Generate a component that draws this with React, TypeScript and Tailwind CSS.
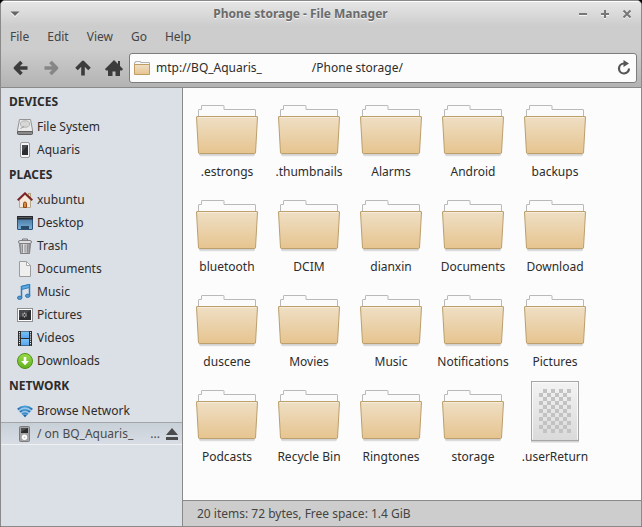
import React, { useState } from 'react';

interface Place {
  name: string;
  icon: React.ReactNode;
}

interface PlaceGroup {
  title: string;
  items: Place[];
}

interface FileItem {
  name: string;
  kind: 'folder' | 'file';
}

const MENUS = ['File', 'Edit', 'View', 'Go', 'Help'];

const FILES: FileItem[] = [
  { name: '.estrongs', kind: 'folder' },
  { name: '.thumbnails', kind: 'folder' },
  { name: 'Alarms', kind: 'folder' },
  { name: 'Android', kind: 'folder' },
  { name: 'backups', kind: 'folder' },
  { name: 'bluetooth', kind: 'folder' },
  { name: 'DCIM', kind: 'folder' },
  { name: 'dianxin', kind: 'folder' },
  { name: 'Documents', kind: 'folder' },
  { name: 'Download', kind: 'folder' },
  { name: 'duscene', kind: 'folder' },
  { name: 'Movies', kind: 'folder' },
  { name: 'Music', kind: 'folder' },
  { name: 'Notifications', kind: 'folder' },
  { name: 'Pictures', kind: 'folder' },
  { name: 'Podcasts', kind: 'folder' },
  { name: 'Recycle Bin', kind: 'folder' },
  { name: 'Ringtones', kind: 'folder' },
  { name: 'storage', kind: 'folder' },
  { name: '.userReturn', kind: 'file' },
];

// Shared gradients, referenced by id from the icons below
const Gradients: React.FC = () => (
  <svg width="0" height="0" className="absolute" aria-hidden="true">
    <defs>
      <linearGradient id="folder" x1="0" y1="0" x2="0" y2="1">
        <stop offset="0" stopColor="#efdfc5" />
        <stop offset="1" stopColor="#e6c48f" />
      </linearGradient>
      <linearGradient id="sheet" x1="0" y1="0" x2="0" y2="1">
        <stop offset="0" stopColor="#f3f3f3" />
        <stop offset="1" stopColor="#dadada" />
      </linearGradient>
      <linearGradient id="desk" x1="0" y1="0" x2="0" y2="1">
        <stop offset="0" stopColor="#3d6f9c" />
        <stop offset="1" stopColor="#7fb2d8" />
      </linearGradient>
      <linearGradient id="film" x1="0" y1="0" x2="0" y2="1">
        <stop offset="0" stopColor="#79c0f7" />
        <stop offset="1" stopColor="#55a5ee" />
      </linearGradient>
      <linearGradient id="green" x1="0" y1="0" x2="0" y2="1">
        <stop offset="0" stopColor="#9bdb4c" />
        <stop offset="1" stopColor="#62b01e" />
      </linearGradient>
      <linearGradient id="metal" x1="0" y1="0" x2="1" y2="0">
        <stop offset="0" stopColor="#8c8c8c" />
        <stop offset="0.4" stopColor="#e8e8e8" />
        <stop offset="1" stopColor="#85858a" />
      </linearGradient>
      <linearGradient id="wifi" x1="0" y1="0" x2="0" y2="1">
        <stop offset="0" stopColor="#4aa0d8" />
        <stop offset="1" stopColor="#1f64a8" />
      </linearGradient>
    </defs>
  </svg>
);

const Icon: React.FC<{ children: React.ReactNode }> = ({ children }) => (
  <svg width="16" height="16" viewBox="0 0 16 16" className="shrink-0" aria-hidden="true">
    {children}
  </svg>
);

const DriveIcon = () => (
  <Icon>
    <path d="M2.500 .5h11l2 10.500v3.500h-15V11z" fill="#e9e9e9" stroke="#939393" />
    <path d="M.5 12.500h15v2a1 1 0 0 1-1 1h-13a1 1 0 0 1-1-1z" fill="#8a8a8a" stroke="#5f5f5f" />
    <ellipse cx="8" cy="5" rx="4.500" ry="3.200" fill="#dadada" stroke="#b2b2b2" />
    <ellipse cx="8" cy="5" rx="1.300" ry="1" fill="#fff" stroke="#aaa" strokeWidth=".5" />
    <path d="M3.500 9.500L7 7.500" stroke="#999" />
  </Icon>
);

const PhoneIcon = () => (
  <Icon>
    <rect x="3.500" y=".5" width="9" height="15" rx="1.500" fill="#f4f4f4" stroke="#999" />
    <rect x="5" y="3" width="6" height="10" fill="#2b2d30" />
    <path d="M5 3h6L5 10z" fill="#4a4d52" />
  </Icon>
);

const HouseIcon = () => (
  <Icon>
    <rect x="11.500" y="1.500" width="2" height="5" fill="#e8dcc0" stroke="#a89468" strokeWidth=".8" />
    <path d="M2.500 8L8 2.500 13.500 8v7.500h-11z" fill="#f6e9da" stroke="#b8a890" />
    <path d="M.7 8.300L8 1.300l7.300 7" fill="none" stroke="#7d2326" strokeWidth="2" />
    <path d="M6.500 15.500v-4a1.500 1.500 0 0 1 3 0v4z" fill="#d8873c" stroke="#8f4a17" />
  </Icon>
);

const DesktopIcon = () => (
  <Icon>
    <rect x=".5" y="1.500" width="15" height="13" rx=".5" fill="url(#desk)" stroke="#2c5377" />
    <rect x="0" y="1" width="16" height="3.500" rx=".5" fill="#26292c" />
    <path d="M1 2.500h14" stroke="#54595e" />
    <rect x="4" y="11" width="8" height="3" fill="#284b6c" />
  </Icon>
);

const TrashIcon = () => (
  <Icon>
    <path d="M2.500 5.500h11l-1 10h-9z" fill="url(#metal)" stroke="#7d7d82" />
    <path d="M5.500 6.500v8M8 6.500v8M10.500 6.500v8" stroke="#8b8b90" />
    <rect x="1.500" y="2.500" width="13" height="3" rx="1.500" fill="#dedee0" stroke="#808084" />
    <path d="M5.500 2.500v-1.500h5v1.500" fill="none" stroke="#77777b" />
  </Icon>
);

const DocumentIcon = () => (
  <Icon>
    <path d="M2.500 .5h7l4 4v11h-11z" fill="#efefef" stroke="#9c9c9c" />
    <path d="M9.500 .5v4h4z" fill="#fff" stroke="#a8a8a8" />
  </Icon>
);

const MusicIcon = () => (
  <Icon>
    <path d="M4.500 13.500V2.500l8-2v11" fill="none" stroke="#2f7fc0" strokeWidth="1.500" />
    <path d="M4.500 2.500l8-2v3l-8 2z" fill="#62abe0" stroke="#2f7fc0" />
    <ellipse cx="2.700" cy="13.800" rx="2.300" ry="1.700" fill="#4a9ad8" stroke="#2669a4" strokeWidth=".8" />
    <ellipse cx="10.700" cy="11.800" rx="2.300" ry="1.700" fill="#4a9ad8" stroke="#2669a4" strokeWidth=".8" />
  </Icon>
);

const PictureIcon = () => (
  <Icon>
    <rect x=".5" y="1.500" width="15" height="13" fill="#fff" stroke="#8f8f8f" />
    <rect x="2" y="3" width="12" height="10" fill="#2d2f31" />
    <path d="M2 3h12L2 11z" fill="#46484b" />
    <path d="M7.500 5.500v5M5 8h5M5.700 6.200l3.600 3.600M9.300 6.200L5.700 9.800" stroke="#bdbdbd" strokeWidth=".9" />
    <circle cx="7.500" cy="8" r=".9" fill="#333" />
  </Icon>
);

const VideoIcon = () => (
  <Icon>
    <rect x="1" y="1" width="14" height="15" fill="#2b2d2f" />
    <rect x="4" y="1.500" width="8" height="6.500" fill="url(#film)" />
    <rect x="4" y="9" width="8" height="6.500" fill="url(#film)" />
    <path d="M2.500 2v13.500M13.500 2v13.500" stroke="#e6e6e6" strokeDasharray="1.200 1" />
  </Icon>
);

const DownloadIcon = () => (
  <Icon>
    <circle cx="8" cy="8" r="7.500" fill="url(#green)" stroke="#4f9316" />
    <path d="M6.700 4h2.600v4h2.700L8 12.300 4 8h2.700z" fill="#fff" />
  </Icon>
);

const WifiIcon = () => (
  <Icon>
    <path d="M0 6a11.500 11.500 0 0 1 16 0L8 14.500z" fill="#9cc6e6" />
    <g fill="none" stroke="url(#wifi)" strokeWidth="1.800">
      <path d="M.8 6.300a10.500 10.500 0 0 1 14.400 0" />
      <path d="M3 8.800a7.300 7.300 0 0 1 10 0" />
      <path d="M5.200 11.200a4.200 4.200 0 0 1 5.600 0" />
    </g>
    <path d="M6.200 12.200a2.800 2.800 0 0 1 3.600 0L8 14.300z" fill="#1f64a8" />
  </Icon>
);

const PlayerIcon = () => (
  <Icon>
    <rect x="2.500" y=".5" width="10" height="15" rx="1" fill="#a3a3a3" stroke="#7b7b7b" />
    <rect x="4" y="2" width="7" height="5" fill="#2a2c2e" />
    <path d="M4 2h7L4 6z" fill="#4c4e50" />
    <circle cx="7.500" cy="11.300" r="2.700" fill="#fff" />
    <circle cx="7.500" cy="11.300" r=".9" fill="#c6c6c6" />
  </Icon>
);

const FolderIcon = () => (
  <svg width="64" height="64" viewBox="0 0 64 64" aria-hidden="true">
    <path d="M4 59.500h56" stroke="#000" strokeOpacity=".14" strokeWidth="2" />
    <path d="M5 60.500h54" stroke="#000" strokeOpacity=".06" strokeWidth="2" />
    <path
      d="M3.500 24V15a.5.500 0 0 1 .5-.5h2.500V11a.5.500 0 0 1 .5-.5h21.500a.5.500 0 0 1 .5.500v3.500h31a.5.500 0 0 1 .5.500v9"
      fill="#fbfbfb"
      stroke="#b9b9b9"
    />
    <path
      d="M2 21.500h60a.5.500 0 0 1 .5.500L60.500 58a1 1 0 0 1-1 .5h-55a1 1 0 0 1-1-.5L1.500 22a.5.500 0 0 1 .5-.5z"
      fill="url(#folder)"
      stroke="#bb9f6c"
    />
    <path d="M3 22.500h58" stroke="#f7ecd9" />
  </svg>
);

const UnknownFileIcon = () => (
  <svg width="64" height="64" viewBox="0 0 64 64" aria-hidden="true">
    <path d="M8 61.500h48" stroke="#000" strokeOpacity=".16" strokeWidth="2" />
    <rect x="8.500" y="1.500" width="47" height="59" fill="url(#sheet)" stroke="#a6a6a6" />
    <path d="M9.500 59.500v-57h45v57" fill="none" stroke="#fafafa" />
    {Array.from({ length: 44 }, (_, i) => {
      const row = Math.floor(i / 4);
      const x = 16 + (i % 4) * 8 + (row % 2 === 0 ? 4 : 0);
      return <rect key={i} x={x} y={9 + row * 4} width="4" height="4" fill="#c2c2c2" />;
    })}
  </svg>
);

const GROUPS: PlaceGroup[] = [
  {
    title: 'DEVICES',
    items: [
      { name: 'File System', icon: <DriveIcon /> },
      { name: 'Aquaris', icon: <PhoneIcon /> },
    ],
  },
  {
    title: 'PLACES',
    items: [
      { name: 'xubuntu', icon: <HouseIcon /> },
      { name: 'Desktop', icon: <DesktopIcon /> },
      { name: 'Trash', icon: <TrashIcon /> },
      { name: 'Documents', icon: <DocumentIcon /> },
      { name: 'Music', icon: <MusicIcon /> },
      { name: 'Pictures', icon: <PictureIcon /> },
      { name: 'Videos', icon: <VideoIcon /> },
      { name: 'Downloads', icon: <DownloadIcon /> },
    ],
  },
  {
    title: 'NETWORK',
    items: [{ name: 'Browse Network', icon: <WifiIcon /> }],
  },
];

const TitleBar: React.FC = () => (
  <div className="flex h-6 items-center border-t border-white bg-linear-to-b from-[#e6e6e6] to-[#cecece] pr-[3px]">
    <button type="button" aria-label="Window menu" className="flex w-7 justify-center">
      <svg width="10" height="6" viewBox="0 0 10 6">
        <path d="M1 2h8L5 6z" fill="#fff" />
        <path d="M.5 .5h9L5 5z" fill="#666" />
      </svg>
    </button>
    <h1 className="flex-1 text-center font-bold text-[#6b6b6b] [text-shadow:0_1px_0_#f2f2f2]">
      Phone storage - File Manager
    </h1>
    <button type="button" aria-label="Minimize" className="flex w-[22px] justify-center">
      <svg width="10" height="10" viewBox="0 0 10 10">
        <path d="M1 6.500h8" stroke="#f4f4f4" />
        <path d="M1 5h8" stroke="#777" strokeWidth="2" />
      </svg>
    </button>
    <button type="button" aria-label="Maximize" className="flex w-[22px] justify-center">
      <svg width="10" height="10" viewBox="0 0 10 10">
        <path d="M1 6.500h8M4 9.500h2" stroke="#f4f4f4" />
        <path d="M1 5h8M5 1v8" stroke="#777" strokeWidth="2" />
      </svg>
    </button>
    <button type="button" aria-label="Close" className="flex w-[22px] justify-center">
      <svg width="10" height="10" viewBox="0 0 10 10">
        <path d="M1.500 2.500l7 7M8.500 2.500l-7 7" stroke="#f4f4f4" strokeWidth="2" />
        <path d="M1.500 1.500l7 7M8.500 1.500l-7 7" stroke="#777" strokeWidth="2" />
      </svg>
    </button>
  </div>
);

const Toolbar: React.FC = () => {
  const [path, setPath] = useState<string>(`mtp://BQ_Aquaris_${'\u00a0'.repeat(16)}/Phone storage/`);

  return (
    <div className="flex h-[39px] items-center border-b border-[#8a8a8a] bg-linear-to-b from-[#cdcdcd] to-[#b3b3b3] pr-1 pl-1">
      <button type="button" aria-label="Back" className="flex w-[31px] justify-center text-[#3c3c3c]">
        <Icon>
          <path d="M8.500 2L2.500 8l6 6M3 8h11.500" fill="none" stroke="currentColor" strokeWidth="3.600" strokeLinejoin="round" />
        </Icon>
      </button>
      <button type="button" aria-label="Forward" className="flex w-[31px] justify-center text-[#868686]">
        <Icon>
          <path d="M6.500 2l6 6-6 6M12 8H.5" fill="none" stroke="currentColor" strokeWidth="3.600" strokeLinejoin="round" />
        </Icon>
      </button>
      <button type="button" aria-label="Parent folder" className="flex w-[31px] justify-center text-[#3c3c3c]">
        <Icon>
          <path d="M1.500 9L8 2.500 14.500 9M8 3v12.500" fill="none" stroke="currentColor" strokeWidth="3.600" strokeLinejoin="round" />
        </Icon>
      </button>
      <button type="button" aria-label="Home" className="flex w-[31px] justify-center text-[#3c3c3c]">
        <svg width="18" height="16" viewBox="0 0 18 16">
          <path d="M9 0L0 9l1 1.500h2V16h4.500v-4.500h3V16H15v-5.500h2L18 9l-3-3V1h-2v3z" fill="currentColor" />
        </svg>
      </button>
      <div className="flex h-[30px] flex-1 items-center rounded-[3px] border border-[#7d7d7d] bg-[#fcfcfc] px-1">
        <svg width="16" height="16" viewBox="0 0 16 16" className="shrink-0" aria-hidden="true">
          <path d="M.5 5V2.500h1v-1h5v1h9V5" fill="#f8f8f8" stroke="#b2b2b2" />
          <path d="M.5 4.500h15v10H.5z" fill="url(#folder)" stroke="#bf9c62" />
        </svg>
        <input
          type="text"
          aria-label="Location"
          className="min-w-0 flex-1 bg-transparent px-[6px] outline-none"
          value={path}
          onChange={(e) => setPath(e.target.value)}
        />
        <button type="button" aria-label="Reload" className="flex text-[#555]">
          <Icon>
            <path d="M13 8.500A5 5 0 1 1 8 3.500h1.500" fill="none" stroke="currentColor" strokeWidth="2.200" />
            <path d="M7.500 0l5.500 3.500L7.500 7z" fill="currentColor" />
          </Icon>
        </button>
      </div>
    </div>
  );
};

const Sidebar: React.FC = () => (
  <aside className="w-[182px] shrink-0 border-r border-[#8a8a8a] bg-[#dbdfe6]">
    {GROUPS.map((group) => (
      <section key={group.title}>
        <h2 className="flex h-[27px] items-center pl-2 font-bold">{group.title}</h2>
        {group.items.map((item) => (
          <button key={item.name} type="button" className="flex h-[23px] w-full items-center gap-1 pl-4">
            {item.icon}
            {item.name}
          </button>
        ))}
      </section>
    ))}
    <div className="flex h-[23px] items-center border-t border-b border-t-[#a2a6ab] border-b-[#eff1f4] bg-linear-to-b from-[#c8d0d8] to-[#d8dde4] pr-1 pl-4 text-[#4a4a4a]">
      <button type="button" className="flex min-w-0 flex-1 items-center gap-1">
        <PlayerIcon />
        <span className="flex-1 text-left whitespace-nowrap">/ on BQ_Aquaris_</span>
        <span>...</span>
      </button>
      <button type="button" aria-label="Eject" className="ml-[6px]">
        <svg width="12" height="12" viewBox="0 0 12 12">
          <path d="M6 0l6 7H0z" fill="#4b4b4b" />
          <path d="M0 9h12v3H0z" fill="#4b4b4b" />
        </svg>
      </button>
    </div>
  </aside>
);

const App: React.FC = () => {
  return (
    <div className="min-h-screen bg-black">
      <Gradients />
      <div className="flex min-h-screen flex-col overflow-hidden rounded-t-[5px] border border-[#8a8a8a] bg-[#cdcdcd] font-['Noto_Sans',sans-serif] text-[12px] leading-4 text-[#2c2c2c]">
        <TitleBar />
        <nav className="flex h-6 items-center pl-px text-[#444]">
          {MENUS.map((menu) => (
            <button key={menu} type="button" className="px-[9px] first:pl-2">
              {menu}
            </button>
          ))}
        </nav>
        <Toolbar />
        <div className="flex flex-1">
          <Sidebar />
          <div className="flex min-w-0 flex-1 flex-col">
            <main className="grid flex-1 grid-cols-[repeat(auto-fill,82px)] content-start gap-y-[10px] bg-[#fcfcfc] pt-[7px] pl-[3px]">
              {FILES.map((file) => (
                <button key={file.name} type="button" className="flex flex-col items-center gap-[5px]">
                  {file.kind === 'folder' ? <FolderIcon /> : <UnknownFileIcon />}
                  <span className="whitespace-nowrap">{file.name}</span>
                </button>
              ))}
            </main>
            <footer className="flex h-[26px] items-center border-t border-[#8a8a8a] px-[14px] text-[#444]">
              20 items: 72 bytes, Free space: 1.4 GiB
            </footer>
          </div>
        </div>
      </div>
    </div>
  );
};

export default App;
